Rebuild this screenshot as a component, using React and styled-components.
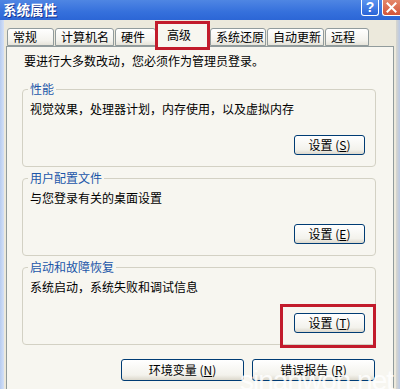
import React from "react";
import styled, { createGlobalStyle, css } from "styled-components";

const GlobalStyle = createGlobalStyle`
  html, body {
    margin: 0;
    padding: 0;
    background: #ECE9DC;
  }
  body {
    font-family: "Noto Sans CJK SC", "Liberation Sans", sans-serif;
    font-size: 12px;
    color: #000;
  }
`;

const tabs = [
  { label: "常规", width: 47 },
  { label: "计算机名", width: 59 },
  { label: "硬件", width: 41 },
  { label: "高级", width: 52, active: true, marked: true },
  { label: "系统还原", width: 56 },
  { label: "自动更新", width: 57 },
  { label: "远程", width: 44 },
];

const groups = [
  { title: "性能", text: "视觉效果，处理器计划，内存使用，以及虚拟内存", key: "S" },
  { title: "用户配置文件", text: "与您登录有关的桌面设置", key: "E" },
  { title: "启动和故障恢复", text: "系统启动，系统失败和调试信息", key: "T", marked: true },
];

// 빨간 표시 박스 (스크린샷 위에 그려진 주석)
const redMark = css`
  &::after {
    content: "";
    position: absolute;
    border: 3px solid #C21B2C;
    pointer-events: none;
    z-index: 5;
  }
`;

const App = () => {
  return (
    <S.Window>
      <GlobalStyle />
      <S.TitleBar>
        <S.Title>系统属性</S.Title>
        <S.Controls>
          <S.HelpButton>?</S.HelpButton>
          <S.CloseButton>
            <svg width="11" height="11" viewBox="0 0 11 11">
              <path d="M1.5 1.5 L9.5 9.5 M9.5 1.5 L1.5 9.5" stroke="#fff" strokeWidth="2" strokeLinecap="square" />
            </svg>
          </S.CloseButton>
        </S.Controls>
      </S.TitleBar>
      <S.Body>
        <S.Frame />
        <S.Main>
          <S.TabRow>
            {tabs.map((t) => (
              <S.Tab key={t.label} $width={t.width} $active={t.active} $marked={t.marked}>
                {t.label}
              </S.Tab>
            ))}
          </S.TabRow>
          <S.Panel>
            <S.Intro>要进行大多数改动，您必须作为管理员登录。</S.Intro>
            {groups.map((g) => (
              <S.Group key={g.title}>
                <S.Legend>{g.title}</S.Legend>
                <S.Description>{g.text}</S.Description>
                <S.ButtonWrap $marked={g.marked}>
                  <S.Button>
                    设置 (<u>{g.key}</u>)
                  </S.Button>
                </S.ButtonWrap>
              </S.Group>
            ))}
            <S.BottomRow>
              <S.Button $wide>
                环境变量 (<u>N</u>)
              </S.Button>
              <S.Button $wide>
                错误报告 (<u>R</u>)
              </S.Button>
            </S.BottomRow>
            <S.Watermark>sinanwon.net</S.Watermark>
          </S.Panel>
        </S.Main>
        <S.Frame $right />
      </S.Body>
    </S.Window>
  );
};

export default App;

const S = {
  Window: styled.div`
    width: 400px;
    height: 389px;
    display: flex;
    flex-direction: column;
    overflow: hidden;
    background: #ECE9DC;
  `,
  TitleBar: styled.div`
    height: 20px;
    flex-shrink: 0;
    display: flex;
    align-items: flex-start;
    background: linear-gradient(to bottom, #4F86E3, #3570DC 60%, #2C66D6);
    overflow: hidden;
  `,
  Title: styled.div`
    padding-left: 3px;
    line-height: 18px;
    font-size: 13.5px;
    font-weight: bold;
    color: #fff;
    text-shadow: 1px 1px 0 #17358F;
  `,
  Controls: styled.div`
    margin-left: auto;
    display: flex;
    gap: 3px;
  `,
  HelpButton: styled.div`
    width: 16px;
    height: 15px;
    border: 1px solid #fff;
    border-top: none;
    border-radius: 0 0 3px 3px;
    background: linear-gradient(to bottom, #5C95F0, #2A64D8);
    color: #fff;
    font-family: "Liberation Sans", sans-serif;
    font-weight: bold;
    font-size: 14px;
    line-height: 15px;
    text-align: center;
  `,
  CloseButton: styled.div`
    width: 17px;
    height: 15px;
    border: 1px solid #fff;
    border-top: none;
    border-right: none;
    border-radius: 0 0 0 3px;
    background: linear-gradient(to bottom, #E4876A, #D3553A);
    display: flex;
    align-items: center;
    justify-content: center;
  `,
  Body: styled.div`
    flex: 1;
    display: flex;
    min-height: 0;
  `,
  Frame: styled.div`
    width: 4px;
    flex-shrink: 0;
    background: ${(p) =>
      p.$right
        ? "linear-gradient(to right, #D8D6CC, #B9C8E4)"
        : "linear-gradient(to right, #B7CCF0, #D4E0F6)"};
  `,
  Main: styled.div`
    flex: 1;
    display: flex;
    flex-direction: column;
    padding: 2px 2px 0 2px;
    min-width: 0;
  `,
  TabRow: styled.div`
    height: 24px;
    display: flex;
    align-items: flex-end;
    gap: 1px;
    padding-left: 1px;
    position: relative;
    z-index: 2;
  `,
  Tab: styled.div`
    position: relative;
    box-sizing: border-box;
    width: ${(p) => p.$width}px;
    height: ${(p) => (p.$active ? 26 : 18)}px;
    margin-bottom: ${(p) => (p.$active ? -1 : 0)}px;
    padding-left: ${(p) => (p.$active ? 9 : 5)}px;
    padding-top: ${(p) => (p.$active ? 4 : 1)}px;
    line-height: 14px;
    white-space: nowrap;
    border: 1px solid #919B9C;
    border-bottom: ${(p) => (p.$active ? "none" : "1px solid #919B9C")};
    border-top: ${(p) => (p.$active ? "3px solid #F6B53E" : "1px solid #919B9C")};
    border-radius: 3px 3px 0 0;
    background: ${(p) =>
      p.$active ? "#F7F6F0" : "linear-gradient(to bottom, #FFFFFF, #F4F3EE 70%, #E6E4DA)"};
    ${(p) =>
      p.$marked &&
      css`
        ${redMark}
        &::after {
          top: -3px;
          left: -3px;
          right: -2px;
          bottom: -3px;
        }
      `}
  `,
  Panel: styled.div`
    position: relative;
    flex: 1;
    display: flex;
    flex-direction: column;
    padding: 7px 17px 0 15px;
    border: 1px solid #919B9C;
    border-bottom: none;
    background: #F7F6F0;
  `,
  Intro: styled.div`
    margin-left: 2px;
    line-height: 14px;
    height: 14px;
    margin-bottom: 14px;
  `,
  Group: styled.fieldset`
    margin: 0 0 4px 0;
    padding: 6px 10px 11px 6px;
    border: 1px solid #D3D1C4;
    border-radius: 4px;
    display: flex;
    flex-direction: column;
    min-width: 0;
  `,
  Legend: styled.legend`
    padding: 0 2px;
    margin-left: -1px;
    line-height: 14px;
    color: #1C57A9;
  `,
  Description: styled.div`
    line-height: 14px;
    height: 14px;
    white-space: nowrap;
    padding-left: 1px;
  `,
  ButtonWrap: styled.div`
    position: relative;
    align-self: flex-end;
    margin-top: 19px;
    display: flex;
    ${(p) =>
      p.$marked &&
      css`
        ${redMark}
        &::after {
          top: -9px;
          left: -14px;
          right: -11px;
          bottom: -15px;
        }
      `}
  `,
  Button: styled.div`
    box-sizing: border-box;
    width: ${(p) => (p.$wide ? 123 : 71)}px;
    height: ${(p) => (p.$wide ? 22 : 20)}px;
    border: 1px solid #003C74;
    border-radius: 3px;
    background: linear-gradient(to bottom, #FFFFFF, #F3F2EC 75%, #DCD8CC);
    display: flex;
    align-items: center;
    justify-content: center;
    font-size: 12px;
    line-height: 14px;
    white-space: nowrap;
    u {
      text-underline-offset: 1px;
    }
  `,
  BottomRow: styled.div`
    display: flex;
    justify-content: flex-end;
    gap: 8px;
    margin-top: 10px;
    padding-right: 1px;
  `,
  Watermark: styled.div`
    position: absolute;
    right: 0;
    bottom: -8px;
    font-family: "Liberation Sans", sans-serif;
    font-size: 28px;
    letter-spacing: -1px;
    color: rgba(255, 255, 255, 0.85);
    pointer-events: none;
    z-index: 6;
  `,
};
